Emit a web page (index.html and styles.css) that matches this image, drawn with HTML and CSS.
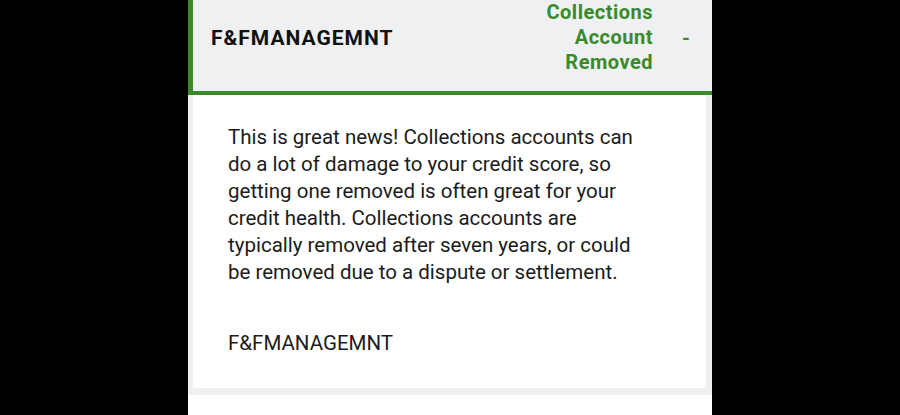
FILE: index.html
```html
<!DOCTYPE html>
<html lang="en">
<head>
<meta charset="utf-8">
<title>Collections Account Removed</title>
<link rel="stylesheet" href="styles.css">
</head>
<body>
<div class="phone">
  <div class="header">
    <div class="title">F&amp;FMANAGEMNT</div>
    <div class="status">Collections<br>Account<br>Removed</div>
    <div class="dash">-</div>
  </div>
  <div class="content">
    <div class="card">
      <p class="desc">This is great news! Collections accounts can<br>do a lot of damage to your credit score, so<br>getting one removed is often great for your<br>credit health. Collections accounts are<br>typically removed after seven years, or could<br>be removed due to a dispute or settlement.</p>
      <p class="creditor">F&amp;FMANAGEMNT</p>
    </div>
  </div>
  <div class="next"></div>
</div>
</body>
</html>
```

FILE: styles.css
```css
html, body {
  margin: 0;
  padding: 0;
  background: #000;
  height: 100%;
  overflow: hidden;
}
body {
  display: flex;
  justify-content: center;
  font-family: "Roboto", "Liberation Sans", sans-serif;
}
.phone {
  width: 524px;
  background: #fff;
  display: flex;
  flex-direction: column;
}
.header {
  display: flex;
  align-items: center;
  background: #eef0f2;
  border-left: 5px solid #3a8a2b;
  border-bottom: 4px solid #3a8a2b;
  padding: 0 0 16px 18px;
  height: 75px;
}
.title {
  flex: 1;
  font-size: 21px;
  font-weight: 700;
  letter-spacing: 1px;
  color: #111;
}
.status {
  text-align: right;
  font-size: 20px;
  font-weight: 700;
  letter-spacing: 0.5px;
  line-height: 25px;
  color: #3a8a2b;
}
.dash {
  width: 22px;
  margin: 0 15px 0 22px;
  font-size: 20px;
  font-weight: 700;
  color: #3a8a2b;
  text-align: center;
}
.content {
  background: #eef0f2;
  padding: 0 6px 7px 5px;
}
.card {
  background: #fff;
  border-radius: 0 0 3px 3px;
  padding: 29px 20px 31px 35px;
}
.desc {
  margin: 0;
  font-size: 20.5px;
  line-height: 27px;
  color: #1b1b1b;
  white-space: nowrap;
}
.creditor {
  margin: 44px 0 0;
  font-size: 20.5px;
  line-height: 27px;
  color: #1b1b1b;
}
.next {
  flex: 1;
  background: #fff;
}
```
